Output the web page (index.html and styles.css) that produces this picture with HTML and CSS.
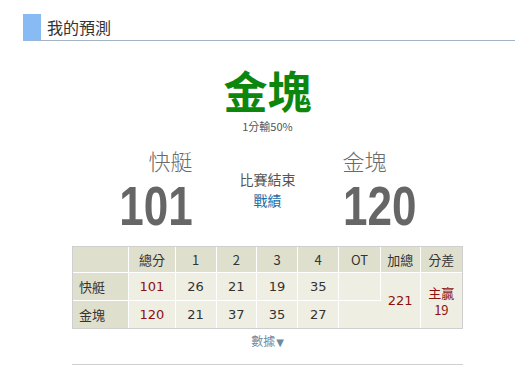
FILE: index.html
```html
<!DOCTYPE html>
<html lang="zh-Hant">
<head>
<meta charset="utf-8">
<link rel="stylesheet" href="styles.css">
</head>
<body>
<div class="section">
  <h2 class="heading"><span class="heading-text">我的預測</span></h2>
  <div class="content">
    <div class="pick">金塊</div>
    <div class="pick-sub">1分輸50%</div>
    <div class="teams">
      <div class="team team-left">
        <div class="team-name">快艇</div>
        <div class="team-score"><span class="num">101</span></div>
      </div>
      <div class="status">
        <div class="status-text">比賽結束</div>
        <a class="status-link">戰績</a>
      </div>
      <div class="team team-right">
        <div class="team-name">金塊</div>
        <div class="team-score"><span class="num">120</span></div>
      </div>
    </div>
    <table class="box">
      <colgroup>
        <col class="c-team"><col class="c-total"><col class="c-q"><col class="c-q2"><col class="c-q"><col class="c-q"><col class="c-q"><col class="c-q2"><col class="c-q">
      </colgroup>
      <thead>
        <tr><th></th><th>總分</th><th>1</th><th>2</th><th>3</th><th>4</th><th>OT</th><th>加總</th><th>分差</th></tr>
      </thead>
      <tbody>
        <tr><th class="tname">快艇</th><td class="red">101</td><td>26</td><td>21</td><td>19</td><td>35</td><td></td><td class="red" rowspan="2">221</td><td class="red diff" rowspan="2"><span class="diff-line">主贏</span><span class="diff-line">19</span></td></tr>
        <tr><th class="tname">金塊</th><td class="red">120</td><td>21</td><td>37</td><td>35</td><td>27</td><td></td></tr>
      </tbody>
    </table>
    <div class="more">數據<span class="arrow">▼</span></div>
    <div class="rule"></div>
  </div>
</div>
</body>
</html>
```
FILE: styles.css
```css
* { box-sizing: border-box; }
html, body {
  margin: 0;
  padding: 0;
  background: #fff;
  font-family: "Noto Sans CJK TC", "Liberation Sans", sans-serif;
  color: #333;
}
.section {
  padding-top: 14px;
  padding-left: 23px;
}
.heading {
  margin: 0;
  height: 27px;
  border-left: 18px solid #88bbf3;
  border-bottom: 1px solid #a3b4c4;
  font-weight: normal;
  font-size: 16px;
  line-height: 26px;
  color: #333;
  padding-left: 6px;
}
.content {
  margin-left: 49px;
  width: 391px;
  text-align: center;
}
.pick {
  margin-top: 27px;
  height: 44px;
  font-size: 44px;
  line-height: 44px;
  font-weight: bold;
  color: #0d860d;
}
.pick-sub {
  margin-top: 7px;
  height: 14px;
  font-size: 11px;
  line-height: 14px;
  color: #555;
}
.teams {
  display: grid;
  grid-template-columns: 1fr 150px 1fr;
  margin-top: 12px;
  height: 101px;
}
.team-left { text-align: right; }
.team-right { text-align: left; }
.team-name {
  height: 30px;
  font-size: 22px;
  line-height: 30px;
  font-weight: 300;
  color: #6a6a6a;
}
.team-score {
  margin-top: 5px;
  height: 52px;
  font-family: "Liberation Sans", sans-serif;
  font-weight: bold;
  font-size: 55px;
  line-height: 52px;
  color: #666;
}
.num {
  display: inline-block;
  transform: scaleX(0.8);
}
.team-left .num { transform-origin: right center; }
.team-right .num { transform-origin: left center; }
.status {
  padding-top: 24px;
}
.status-text {
  font-size: 14px;
  line-height: 20px;
  color: #555;
}
.status-link {
  display: block;
  font-size: 14px;
  line-height: 22px;
  color: #1f6fa8;
  text-decoration: none;
}
.box {
  width: 391px;
  table-layout: fixed;
  border-collapse: separate;
  border-spacing: 0;
  border: 1px solid #cfcfcf;
  font-size: 13px;
  color: #333;
}
.c-team { width: 56px; }
.c-total { width: 46px; }
.c-q { width: 41px; }
.c-q2 { width: 40px; }
.box th, .box td {
  padding: 0;
  text-align: center;
  font-weight: normal;
  border-right: 1px solid #fff;
  border-bottom: 1px solid #fff;
  font-family: "Noto Sans CJK TC", "DejaVu Sans", sans-serif;
}
.box th:last-child, .box td:last-child { border-right: 0; }
.box tbody tr:last-child th, .box tbody tr:last-child td,
.box td[rowspan] { border-bottom: 0; }
.box thead th {
  height: 26px;
  background: #dfdfcd;
}
.box tbody th, .box tbody td { height: 27px; }
.box tbody tr:first-child th, .box tbody tr:first-child td { height: 28px; }
.box tbody th.tname {
  background: #dfdfcd;
  text-align: left;
  padding-left: 6px;
}
.box tbody td {
  background: #eeeee2;
  font-family: "DejaVu Sans", sans-serif;
  font-size: 13px;
}
.box td.red { color: #8b1111; }
.box td.diff {
  font-family: "Noto Sans CJK TC", sans-serif;
}
.diff-line {
  display: block;
  height: 17px;
  line-height: 17px;
}
.more {
  margin-top: 4px;
  font-size: 12px;
  line-height: 16px;
  color: #6e8aa3;
}
.arrow {
  font-size: 10px;
  margin-left: 1px;
  font-family: "DejaVu Sans", sans-serif;
}
.rule {
  margin-top: 13px;
  border-top: 1px solid #cfcfcf;
}
```
